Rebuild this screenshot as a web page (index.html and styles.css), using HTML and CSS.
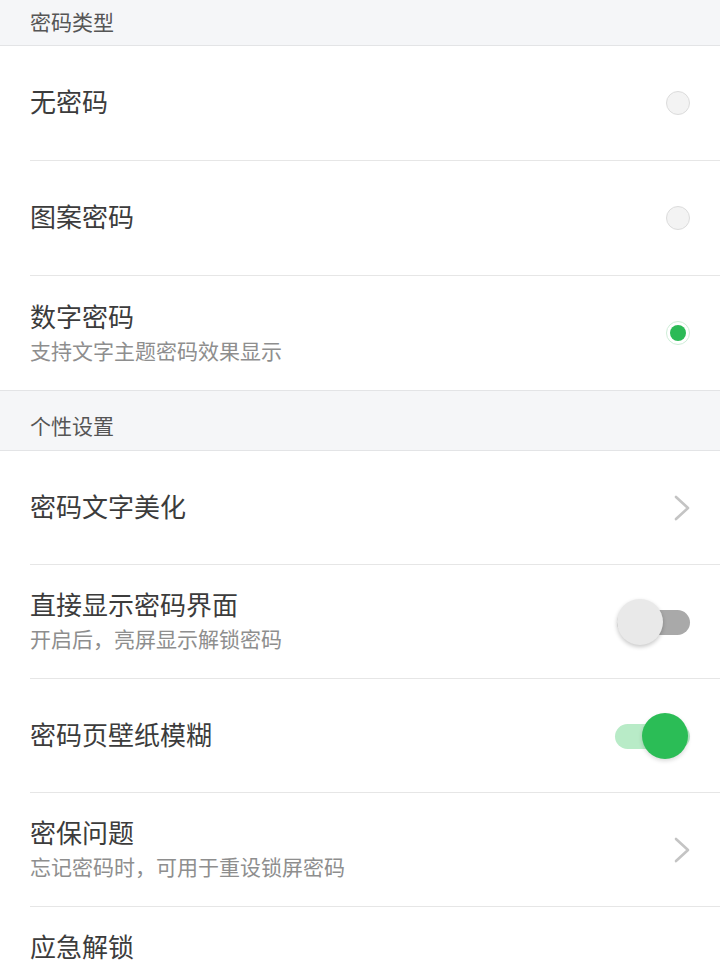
FILE: index.html
```html
<!DOCTYPE html>
<html lang="zh-CN">
<head>
<meta charset="utf-8">
<title>密码设置</title>
<link rel="stylesheet" href="styles.css">
</head>
<body>
<div class="page">
  <div class="section-header section-header--clipped">密码类型</div>
  <div class="section section--radio">
    <div class="row">
      <div class="row-inner">
        <div class="texts"><div class="title">无密码</div></div>
        <span class="radio"></span>
      </div>
    </div>
    <div class="row">
      <div class="row-inner">
        <div class="texts"><div class="title">图案密码</div></div>
        <span class="radio"></span>
      </div>
    </div>
    <div class="row row--last">
      <div class="row-inner row-inner--two">
        <div class="texts">
          <div class="title">数字密码</div>
          <div class="subtitle">支持文字主题密码效果显示</div>
        </div>
        <span class="radio radio--checked"><span class="radio-dot"></span></span>
      </div>
    </div>
  </div>

  <div class="section-header">个性设置</div>
  <div class="section">
    <div class="row">
      <div class="row-inner">
        <div class="texts"><div class="title">密码文字美化</div></div>
        <svg class="chevron" width="16" height="26" viewBox="0 0 16 26"><polyline points="2,2 14,13 2,24" fill="none" stroke="#c4c4c4" stroke-width="2.6" stroke-linecap="round" stroke-linejoin="round"/></svg>
      </div>
    </div>
    <div class="row">
      <div class="row-inner row-inner--two">
        <div class="texts">
          <div class="title">直接显示密码界面</div>
          <div class="subtitle">开启后，亮屏显示解锁密码</div>
        </div>
        <span class="switch"><span class="switch-track"></span><span class="switch-knob"></span></span>
      </div>
    </div>
    <div class="row">
      <div class="row-inner">
        <div class="texts"><div class="title">密码页壁纸模糊</div></div>
        <span class="switch switch--on"><span class="switch-track"></span><span class="switch-knob"></span></span>
      </div>
    </div>
    <div class="row">
      <div class="row-inner row-inner--two">
        <div class="texts">
          <div class="title">密保问题</div>
          <div class="subtitle">忘记密码时，可用于重设锁屏密码</div>
        </div>
        <svg class="chevron" width="16" height="26" viewBox="0 0 16 26"><polyline points="2,2 14,13 2,24" fill="none" stroke="#c4c4c4" stroke-width="2.6" stroke-linecap="round" stroke-linejoin="round"/></svg>
      </div>
    </div>
    <div class="row">
      <div class="row-inner row-inner--top">
        <div class="texts"><div class="title">应急解锁</div></div>
      </div>
    </div>
  </div>
</div>
</body>
</html>
```
FILE: styles.css
```css
html, body {
  margin: 0;
  padding: 0;
  background: #ffffff;
}
body {
  font-family: "Noto Sans CJK SC", "Noto Sans", sans-serif;
  overflow: hidden;
  height: 960px;
}
.page {
  width: 720px;
}
.section-header {
  box-sizing: border-box;
  height: 60px;
  padding: 8px 30px 0;
  display: flex;
  align-items: center;
  background: #f5f6f8;
  border-bottom: 1px solid #e3e4e6;
  color: #555555;
  font-size: 21px;
  line-height: 28px;
}
.section-header--clipped {
  height: 46px;
  padding-top: 0;
  padding-bottom: 4px;
}
.section--radio {
  border-bottom: 1px solid #e3e4e6;
}
.row {
  padding-left: 30px;
}
.row-inner {
  box-sizing: border-box;
  height: 114px;
  padding-right: 30px;
  padding-bottom: 4px;
  display: flex;
  align-items: center;
  justify-content: space-between;
  border-bottom: 1px solid #e6e6e6;
}
.row-inner--two {
  padding-bottom: 0;
}
.section--radio .row-inner {
  height: 115px;
}
.row--last .row-inner {
  border-bottom: none;
  height: 114px;
}
.row-inner--top {
  align-items: flex-start;
  padding-top: 23px;
  padding-bottom: 0;
  border-bottom: none;
}
.texts {
  display: flex;
  flex-direction: column;
}
.title {
  font-size: 26px;
  line-height: 32px;
  color: #3c3c3c;
}
.subtitle {
  margin-top: 1px;
  font-size: 21px;
  line-height: 34px;
  color: #8e8e8e;
}
.radio {
  box-sizing: border-box;
  width: 24px;
  height: 24px;
  border-radius: 50%;
  background: #f3f3f3;
  border: 1px solid #dcdcdc;
  display: flex;
  align-items: center;
  justify-content: center;
}
.row-inner .radio {
  margin-top: 4px;
}
.row-inner--two .radio {
  margin-top: 0;
}
.radio--checked {
  background: #ffffff;
  border: 1px solid #cfeed8;
}
.radio-dot {
  width: 16px;
  height: 16px;
  border-radius: 50%;
  background: #2bba56;
}
.chevron {
  display: block;
}
.row-inner .chevron,
.row-inner .switch {
  margin-top: 4px;
}
.row-inner--two .chevron,
.row-inner--two .switch {
  margin-top: 0;
}
.switch {
  position: relative;
  width: 75px;
  height: 46px;
  flex: none;
}
.switch-track {
  position: absolute;
  left: 2px;
  right: 0;
  top: 11px;
  height: 25px;
  border-radius: 13px;
  background: #a9a9a9;
}
.switch-knob {
  position: absolute;
  top: 0;
  left: 2px;
  width: 46px;
  height: 46px;
  border-radius: 50%;
  background: #e9e9e9;
  box-shadow: 0 2px 4px rgba(0, 0, 0, 0.22);
}
.switch--on .switch-track {
  left: 0;
  background: #b8ebc7;
}
.switch--on .switch-knob {
  left: auto;
  right: 2px;
  background: #2bbd56;
  box-shadow: 0 2px 4px rgba(0, 0, 0, 0.15);
}
```
